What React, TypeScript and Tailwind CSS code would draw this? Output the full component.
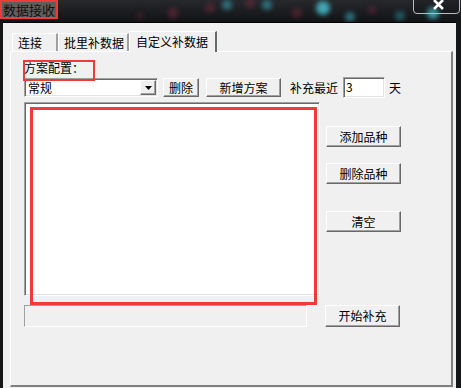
import React from "react";

const font = { fontFamily: '"Noto Sans CJK SC", "Noto Sans", sans-serif' };

const btn =
  "flex items-center justify-center bg-[#f0f0f0] border border-t-white border-l-white border-r-[#696969] border-b-[#696969] shadow-[inset_-1px_-1px_0_#a0a0a0] text-[12px] leading-none text-black";
const sunken =
  "border border-t-[#a0a0a0] border-l-[#a0a0a0] border-r-white border-b-white shadow-[inset_1px_1px_0_#696969,inset_-1px_-1px_0_#e3e3e3]";

function TitleBg() {
  const dots: [number, number, number, string, number][] = [
    [173, 13, 5, "#7a2a3c", 0.6],
    [210, 8, 5, "#7a2a3c", 0.5],
    [227, 5, 5, "#3aa7b8", 0.6],
    [250, 3, 5, "#7a2a3c", 0.5],
    [267, 5, 5, "#3aa7b8", 0.6],
    [297, 13, 5, "#7a2a3c", 0.5],
    [323, 8, 7, "#48c8d8", 0.8],
    [350, 17, 5, "#3aa7b8", 0.6],
    [372, 10, 4, "#7a2a3c", 0.45],
    [400, 16, 5, "#2f8a99", 0.55],
    [433, 13, 6, "#48c8d8", 0.75],
    [140, 16, 4, "#5a2430", 0.45],
  ];
  return (
    <svg className="absolute inset-0" width="461" height="22">
      <defs>
        <linearGradient id="tb" x1="0" y1="0" x2="0" y2="1">
          <stop offset="0" stopColor="#26282c" />
          <stop offset="1" stopColor="#111315" />
        </linearGradient>
        <filter id="bl" x="-1" y="-1" width="3" height="3">
          <feGaussianBlur stdDeviation="2.4" />
        </filter>
      </defs>
      <rect width="461" height="22" fill="url(#tb)" />
      {dots.map(([x, y, r, c, o], i) => (
        <circle key={i} cx={x} cy={y} r={r} fill={c} opacity={o} filter="url(#bl)" />
      ))}
    </svg>
  );
}

export default function App() {
  return (
    <div className="relative w-[461px] h-[388px] overflow-hidden bg-[#141618]" style={font}>
      {/* title bar */}
      <div className="relative h-[22px] flex items-start">
        <TitleBg />
        <div className="relative h-[19px] w-[58px] border-2 border-[#f03a3a] bg-[#5e5e5e] flex items-center pl-[1px] text-[13px] leading-none text-[#111]">
          数据接收
        </div>
        <div className="absolute left-[413px] top-[-2px] w-[47px] h-[16px] border border-[#b8bcc2] rounded-b-[4px] bg-black/10 flex items-start justify-center">
          <svg width="13" height="10" viewBox="0 0 13 10" className="ml-[4px] mt-[1px]">
            <path d="M2 0 L11 9 M11 0 L2 9" stroke="#fff" strokeWidth="2.6" />
          </svg>
        </div>
      </div>

      {/* client area */}
      <div className="ml-[3px] w-[453px] h-[366px] bg-[#f0f0f0] border-t border-black pt-[7px] pl-[7px]">
        {/* tabs */}
        <div className="flex items-end h-[21px] pl-[2px] relative z-10">
          <div className="h-[18px] w-[46px] border-l border-t border-white border-r-2 border-r-[#a0a0a0] flex items-center pl-[5px] text-[12px] leading-none text-black">
            连接
          </div>
          <div className="h-[18px] w-[71px] border-l border-t border-white border-r-2 border-r-[#a0a0a0] flex items-center pl-[5px] text-[12px] leading-none text-black">
            批里补数据
          </div>
          <div className="h-[21px] w-[88px] -mb-[1px] bg-[#f0f0f0] border-l border-t border-white border-r-2 border-r-[#696969] flex items-center pl-[6px] text-[12px] leading-none text-black">
            自定义补数据
          </div>
        </div>

        {/* panel */}
        <div className="relative w-[443px] h-[336px] border-l border-t border-white border-r-2 border-b-2 border-r-[#808080] border-b-[#808080] pl-[13px] pt-[7px]">
          <div className="h-[18px] flex items-center text-[12px] leading-none text-black">方案配置：</div>
          <div className="flex items-center h-[21px]">
            <div className={`${sunken} w-[134px] h-[19px] bg-white flex items-center justify-between pl-[3px] pr-[1px]`}>
              <span className="text-[12px] leading-none text-black">常规</span>
              <div className={`${btn} w-[16px] h-[15px]`}>
                <svg width="7" height="4" viewBox="0 0 7 4">
                  <path d="M0 0 H7 L3.5 4 Z" fill="#000" />
                </svg>
              </div>
            </div>
            <div className={`${btn} ml-[5px] w-[36px] h-[19px]`}>删除</div>
            <div className={`${btn} ml-[7px] w-[75px] h-[19px]`}>新增方案</div>
            <div className="ml-[9px] text-[12px] leading-none text-black">补充最近</div>
            <div className={`${sunken} ml-[5px] w-[42px] h-[21px] bg-white pl-[2px] pt-[3px] text-[12px] leading-none text-black`}>3</div>
            <div className="ml-[4px] text-[12px] leading-none text-black">天</div>
          </div>

          <div className="flex mt-[4px]">
            <div className={`${sunken} w-[296px] h-[194px] bg-white`} />
            <div className="ml-[6px] flex flex-col pt-[24px]">
              <div className={`${btn} w-[75px] h-[21px]`}>添加品种</div>
              <div className={`${btn} w-[75px] h-[21px] mt-[16px]`}>删除品种</div>
              <div className={`${btn} w-[75px] h-[21px] mt-[27px]`}>清空</div>
            </div>
          </div>

          <div className="flex mt-[9px]">
            <div className="w-[283px] h-[22px] border border-t-[#a0a0a0] border-l-[#a0a0a0] border-r-white border-b-white bg-[#f0f0f0]" />
            <div className={`${btn} ml-[18px] w-[75px] h-[22px]`}>开始补充</div>
          </div>

          {/* annotation boxes */}
          <div className="absolute left-[12px] top-[8px] w-[72px] h-[21px] border-2 border-[#f03a3a]" />
          <div className="absolute left-[19px] top-[55px] w-[287px] h-[198px] border-[3px] border-[#f03a3a]" />
        </div>
      </div>
    </div>
  );
}
